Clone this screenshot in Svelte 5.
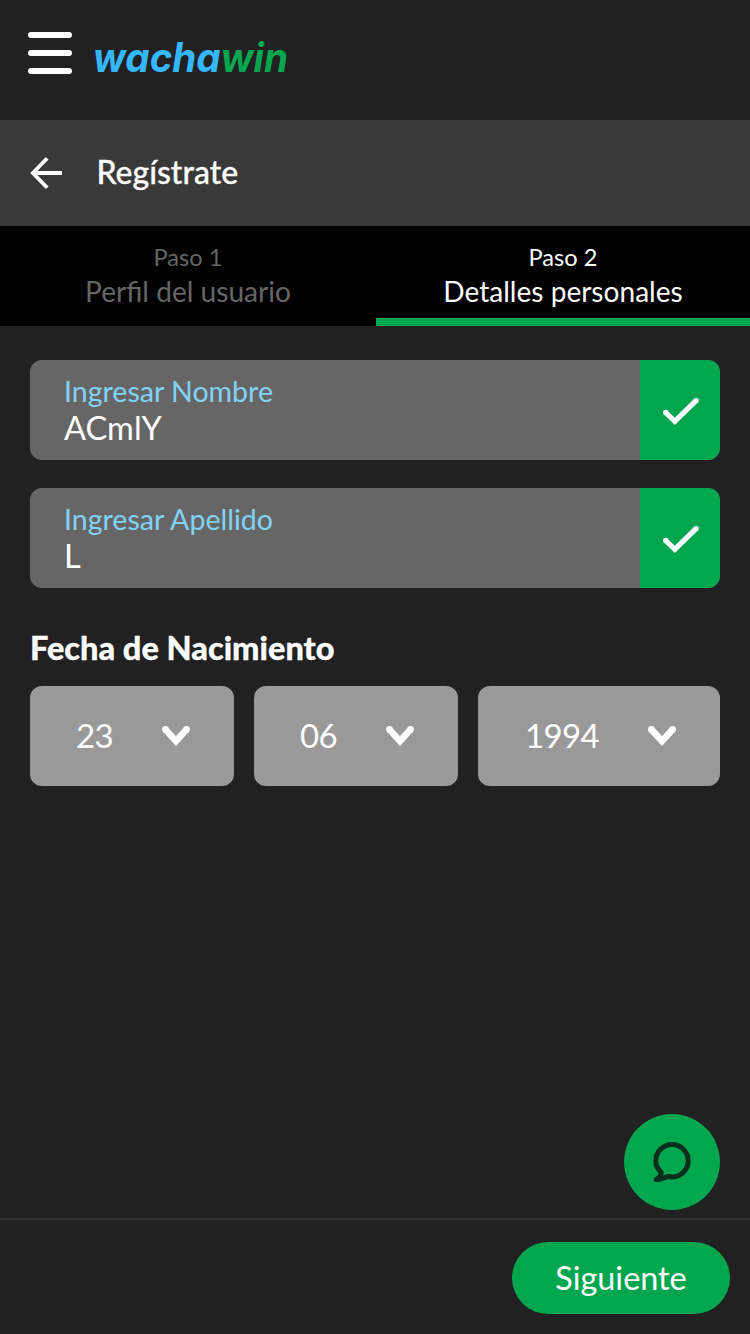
<script>
  const steps = [
    { step: 'Paso 1', title: 'Perfil del usuario', active: false },
    { step: 'Paso 2', title: 'Detalles personales', active: true }
  ];
  const fields = [
    { label: 'Ingresar Nombre', value: 'ACmlY' },
    { label: 'Ingresar Apellido', value: 'L' }
  ];
  const dates = ['23', '06', '1994'];
</script>

<div class="page">
  <header>
    <button class="menu" aria-label="Menu"><i></i><i></i><i></i></button>
    <svg class="logo" width="216" height="56" viewBox="0 0 216 56">
      <text x="1" y="39.5" textLength="195" lengthAdjust="spacingAndGlyphs"><tspan fill="#35b8ff">wacha</tspan><tspan fill="#02a64f">win</tspan></text>
    </svg>
  </header>

  <div class="bar">
    <svg width="34" height="34" viewBox="0 0 34 34" fill="none" stroke="#fff" stroke-width="3.8">
      <path d="M18.2 2.2 3.9 17 18.2 31.8M3.9 17H33" />
    </svg>
    <h1>Regístrate</h1>
  </div>

  <nav>
    {#each steps as s}
      <div class="tab" class:active={s.active}>
        <span class="step">{s.step}</span>
        <span class="title">{s.title}</span>
      </div>
    {/each}
  </nav>

  <main>
    {#each fields as f}
      <div class="field">
        <div class="text">
          <span class="label">{f.label}</span>
          <span class="value">{f.value}</span>
        </div>
        <div class="ok">
          <svg width="40" height="32" viewBox="0 0 40 32" fill="none" stroke="#fff" stroke-width="5.2">
            <path d="M5.2 18 14.8 27.4 36.6 6.2" />
            <path d="M5.6 18.4h0M36.2 6.6h0" stroke-linecap="round" />
          </svg>
        </div>
      </div>
    {/each}
    <h2>Fecha de Nacimiento</h2>
    <div class="dates">
      {#each dates as d}
        <div class="select">
          <span>{d}</span>
          <svg width="28" height="20" viewBox="0 0 28 20" fill="none" stroke="#fff" stroke-width="6.6">
            <path d="M3.4 3.4 14 15 24.6 3.4" />
            <path d="M3.4 3.4h0M24.6 3.4h0" stroke-linecap="round" />
          </svg>
        </div>
      {/each}
    </div>
  </main>

  <button class="chat" aria-label="Chat">
    <svg width="40" height="42" viewBox="0 0 40 42" fill="none" stroke="#06301c" stroke-width="5" stroke-linejoin="round">
      <path d="M9.2 31.2C5.8 28.4 3.8 24.3 3.8 19.8A16.2 16.2 0 1 1 20 35.9C18.1 35.9 17.4 35.2 15.2 35.7C11.4 37.2 8.4 38.6 4.1 38.5C6.8 37.1 9.4 34.6 9.2 31.2Z" />
    </svg>
  </button>

  <footer><button class="next">Siguiente</button></footer>
</div>

<style>
  :global(body) { margin: 0; background: #212121; }
  .page {
    box-sizing: border-box;
    position: relative;
    display: flex;
    flex-direction: column;
    height: 1334px;
    background: #212121;
    color: #fff;
    font-family: Lato, sans-serif;
    overflow: hidden;
  }
  button { border: 0; padding: 0; font: inherit; color: inherit; }
  header { display: flex; height: 120px; box-sizing: border-box; padding: 32px 28px; }
  .menu { display: flex; flex-direction: column; gap: 11.6px; width: 44px; background: none; }
  .menu i { height: 6.4px; width: 44px; border-radius: 3px; background: #fff; }
  .logo { margin-left: 20px; font: italic 700 40.5px Inter, sans-serif; overflow: visible; }
  .bar { display: flex; align-items: center; gap: 33.4px; height: 106px; box-sizing: border-box; padding: 0 29px; background: #393939; }
  h1 { margin: 0; padding-bottom: 3px; font-size: 32px; line-height: 38px; font-weight: 500; -webkit-text-stroke: 0.3px #fff; }
  nav { display: grid; grid-template-columns: 376px 1fr; height: 100px; background: #000; }
  .tab { display: flex; flex-direction: column; align-items: center; box-sizing: border-box; padding-top: 16px; color: #666; border-bottom: 8px solid transparent; }
  .active { color: #fff; border-color: #02a64f; }
  .step { font-size: 23.6px; line-height: 30px; }
  .title { font-size: 28.1px; line-height: 38px; }
  main { display: flex; flex-direction: column; flex: 1; padding: 34px 30px 0; }
  .field { display: flex; height: 100px; margin-bottom: 28px; border-radius: 12px; overflow: hidden; background: #666; }
  .text { display: flex; flex-direction: column; flex: 1; padding: 13px 34px 0; }
  .label { color: #82d3f8; font-size: 28.55px; line-height: 36px; }
  .value { font-size: 32.6px; line-height: 37px; }
  .ok { display: flex; align-items: center; justify-content: center; width: 80px; background: #02a64f; }
  h2 { margin: 12px 0 18px; font-size: 32.5px; line-height: 40px; font-weight: 900; -webkit-text-stroke: 0.3px #fff; }
  .dates { display: grid; grid-template-columns: 204px 204px 242px; gap: 20px; }
  .select { display: flex; align-items: center; justify-content: space-between; box-sizing: border-box; height: 100px; padding: 0 44px 0 46px; border-radius: 12px; background: #999; font-size: 33px; letter-spacing: -0.6px; }
  .select span { padding-bottom: 2px; }
  .select:last-child span { padding-left: 1px; }
  .chat { position: absolute; right: 30px; bottom: 124px; display: flex; align-items: center; justify-content: center; width: 96px; height: 96px; border-radius: 50%; background: #02a64f; }
  footer { display: flex; justify-content: flex-end; box-sizing: border-box; height: 116px; padding: 22px 20px; border-top: 2px solid #333; }
  .next { width: 218px; height: 72px; padding-bottom: 2px; border-radius: 36px; background: #02a64f; font-size: 32.4px; }
</style>
